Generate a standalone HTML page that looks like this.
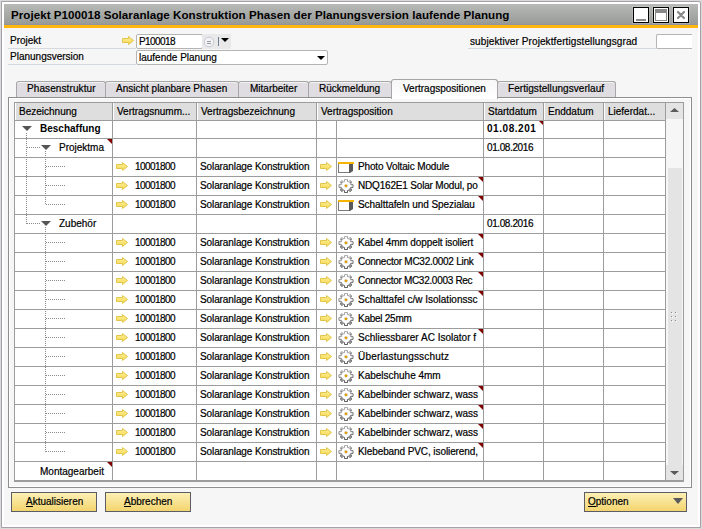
<!DOCTYPE html><html><head><meta charset="utf-8"><style>
html,body{margin:0;padding:0;}
body{width:702px;height:529px;position:relative;overflow:hidden;background:#d9dbd9;font-family:"Liberation Sans", sans-serif;font-size:10px;color:#000;}
</style></head><body>
<div style="position:absolute;left:1px;top:1px;width:698px;height:525px;border:1px solid #a79fa9;background:#fff;border-radius:0 2px 0 0"></div>
<div style="position:absolute;left:4px;top:4px;width:694px;height:21px;background:linear-gradient(#b8bab8,#979997)"></div>
<div style="position:absolute;left:4px;top:24px;width:694px;height:1px;background:#8f959b"></div>
<div style="position:absolute;left:4px;top:25px;width:694px;height:3px;background:#ffb60f"></div>
<div style="position:absolute;left:4px;top:28px;width:694px;height:497px;background:#f6f6f6"></div>
<div style="position:absolute;left:11px;top:4.98px;height:20px;line-height:20px;font-size:11.6px;font-weight:700;color:#000;white-space:nowrap;letter-spacing:0.035px">Projekt P100018 Solaranlage Konstruktion Phasen der Planungsversion laufende Planung</div>
<div style="position:absolute;left:632px;top:6px;width:18px;height:18px;background:rgba(255,255,255,0.18)"></div>
<div style="position:absolute;left:633px;top:7px;width:14px;height:14px;border:1px solid #000;background:#fff"></div>
<div style="position:absolute;left:652px;top:6px;width:18px;height:18px;background:rgba(255,255,255,0.18)"></div>
<div style="position:absolute;left:653px;top:7px;width:14px;height:14px;border:1px solid #000;background:#fff"></div>
<div style="position:absolute;left:672px;top:6px;width:18px;height:18px;background:rgba(255,255,255,0.18)"></div>
<div style="position:absolute;left:673px;top:7px;width:14px;height:14px;border:1px solid #000;background:#fff"></div>
<div style="position:absolute;left:636px;top:19px;width:10px;height:2px;background:#8a8a8a"></div>
<div style="position:absolute;left:655px;top:9px;width:10px;height:10px;border:1px solid #8a8a8a;background:#fff"></div>
<div style="position:absolute;left:655px;top:9px;width:12px;height:4px;background:#8a8a8a"></div>
<svg width="10" height="10" style="position:absolute;left:676px;top:10px"><path d="M2 2 L8 8 M8 2 L2 8" stroke="#8a8a8a" stroke-width="2.2" stroke-linecap="round"/><rect x="3.5" y="3.5" width="3" height="3" fill="#8a8a8a"/></svg>
<div style="position:absolute;left:10px;top:30.53px;height:20px;line-height:20px;font-size:10px;font-weight:400;color:#000;white-space:nowrap;-webkit-text-stroke:0.2px #000;">Projekt</div>
<div style="position:absolute;left:10px;top:46.53px;height:20px;line-height:20px;font-size:10px;font-weight:400;color:#000;white-space:nowrap;-webkit-text-stroke:0.2px #000;">Planungsversion</div>
<div style="position:absolute;left:8px;top:48px;width:128px;height:1px;background:#d3d9df"></div>
<div style="position:absolute;left:8px;top:64px;width:128px;height:1px;background:#d3d9df"></div>
<svg width="12" height="9" viewBox="0 0 12 9" style="position:absolute;left:122px;top:36px"><defs><linearGradient id="ag1" x1="0" y1="0" x2="0" y2="1"><stop offset="0" stop-color="#fdf0a0"/><stop offset="1" stop-color="#f5d84a"/></linearGradient></defs><path d="M0.5 2.5 H6.5 V0.5 L11.5 4.5 L6.5 8.5 V6.5 H0.5 Z" fill="url(#ag1)" stroke="#e2c54a" stroke-width="1"/></svg>
<div style="position:absolute;left:136px;top:34px;width:65px;height:13px;border:1px solid #b4b4b4;background:#fff;border-radius:2px"></div>
<div style="position:absolute;left:139px;top:31.53px;height:20px;line-height:20px;font-size:10px;font-weight:400;color:#000;white-space:nowrap;-webkit-text-stroke:0.2px #000;letter-spacing:-0.6px">P100018</div>
<div style="position:absolute;left:202px;top:34px;width:29px;height:15px;background:#e9e9e9"></div>
<svg width="12" height="12" style="position:absolute;left:203px;top:36px"><circle cx="6" cy="6" r="4.8" fill="#f3f3f3" stroke="#c6c9d8"/><path d="M4 5.5h4M4 7.5h4" stroke="#9a9aa8"/></svg>
<div style="position:absolute;left:218px;top:37px;width:1px;height:9px;background:#6c7c92"></div>
<svg width="8" height="4" style="position:absolute;left:221px;top:38px"><path d="M0 0 H8 L4.0 4 Z" fill="#000"/></svg>
<div style="position:absolute;left:136px;top:50px;width:190px;height:13px;border:1px solid #b4b4b4;background:#fff;border-radius:2px"></div>
<div style="position:absolute;left:139px;top:47.53px;height:20px;line-height:20px;font-size:10px;font-weight:400;color:#000;white-space:nowrap;-webkit-text-stroke:0.2px #000;">laufende Planung</div>
<svg width="8" height="4" style="position:absolute;left:317px;top:56px"><path d="M0 0 H8 L4.0 4 Z" fill="#000"/></svg>
<div style="position:absolute;left:470px;top:31.53px;height:20px;line-height:20px;font-size:10px;font-weight:400;color:#000;white-space:nowrap;-webkit-text-stroke:0.2px #000;letter-spacing:0.1px">subjektiver Projektfertigstellungsgrad</div>
<div style="position:absolute;left:468px;top:48px;width:188px;height:1px;background:#d3d9df"></div>
<div style="position:absolute;left:656px;top:34px;width:35px;height:13px;border:1px solid #b4b4b4;border-right:none;background:#fff;border-radius:2px 0 0 2px"></div>
<div style="position:absolute;left:16px;top:81px;width:88px;height:16px;border:1px solid #a6a6a6;border-bottom:none;border-radius:3px 3px 0 0;background:#dfdde1;box-shadow:inset 0 1px 0 #f2f2f2"></div>
<div style="position:absolute;left:27px;top:78.53px;height:20px;line-height:20px;font-size:10px;font-weight:400;color:#000;white-space:nowrap;-webkit-text-stroke:0.2px #000;letter-spacing:0.1px">Phasenstruktur</div>
<div style="position:absolute;left:105px;top:81px;width:132px;height:16px;border:1px solid #a6a6a6;border-bottom:none;border-radius:3px 3px 0 0;background:#dfdde1;box-shadow:inset 0 1px 0 #f2f2f2"></div>
<div style="position:absolute;left:116px;top:78.53px;height:20px;line-height:20px;font-size:10px;font-weight:400;color:#000;white-space:nowrap;-webkit-text-stroke:0.2px #000;letter-spacing:0px">Ansicht planbare Phasen</div>
<div style="position:absolute;left:238px;top:81px;width:69px;height:16px;border:1px solid #a6a6a6;border-bottom:none;border-radius:3px 3px 0 0;background:#dfdde1;box-shadow:inset 0 1px 0 #f2f2f2"></div>
<div style="position:absolute;left:250px;top:78.53px;height:20px;line-height:20px;font-size:10px;font-weight:400;color:#000;white-space:nowrap;-webkit-text-stroke:0.2px #000;letter-spacing:0px">Mitarbeiter</div>
<div style="position:absolute;left:308px;top:81px;width:82px;height:16px;border:1px solid #a6a6a6;border-bottom:none;border-radius:3px 3px 0 0;background:#dfdde1;box-shadow:inset 0 1px 0 #f2f2f2"></div>
<div style="position:absolute;left:319px;top:78.53px;height:20px;line-height:20px;font-size:10px;font-weight:400;color:#000;white-space:nowrap;-webkit-text-stroke:0.2px #000;letter-spacing:0px">Rückmeldung</div>
<div style="position:absolute;left:497px;top:81px;width:117px;height:16px;border:1px solid #a6a6a6;border-bottom:none;border-radius:3px 3px 0 0;background:#dfdde1;box-shadow:inset 0 1px 0 #f2f2f2"></div>
<div style="position:absolute;left:508px;top:78.53px;height:20px;line-height:20px;font-size:10px;font-weight:400;color:#000;white-space:nowrap;-webkit-text-stroke:0.2px #000;letter-spacing:0.05px">Fertigstellungsverlauf</div>
<div style="position:absolute;left:8px;top:97px;width:682px;height:389px;border:1px solid #8e8e8e;background:#fff"></div>
<div style="position:absolute;left:10px;top:99px;width:680px;height:387px;background:#f6f6f6"></div>
<div style="position:absolute;left:391px;top:79px;width:105px;height:19px;border:1px solid #a6a6a6;border-bottom:none;border-radius:3px 3px 0 0;background:linear-gradient(#f7f7f7,#fff)"></div>
<div style="position:absolute;left:403px;top:78.53px;height:20px;line-height:20px;font-size:10px;font-weight:400;color:#000;white-space:nowrap;-webkit-text-stroke:0.2px #000;">Vertragspositionen</div>
<div style="position:absolute;left:14px;top:102px;width:668px;height:377px;border:1px solid #9c9c9c;border-bottom-width:2px;background:#fff"></div>
<div style="position:absolute;left:15px;top:103px;width:650px;height:17px;background:#dedede"></div>
<div style="position:absolute;left:15px;top:103px;width:1px;height:17px;background:#fff"></div>
<div style="position:absolute;left:19px;top:101.53px;height:20px;line-height:20px;font-size:10px;font-weight:400;color:#000;white-space:nowrap;-webkit-text-stroke:0.2px #000;">Bezeichnung</div>
<div style="position:absolute;left:113px;top:103px;width:1px;height:17px;background:#fff"></div>
<div style="position:absolute;left:117px;top:101.53px;height:20px;line-height:20px;font-size:10px;font-weight:400;color:#000;white-space:nowrap;-webkit-text-stroke:0.2px #000;">Vertragsnumm...</div>
<div style="position:absolute;left:197px;top:103px;width:1px;height:17px;background:#fff"></div>
<div style="position:absolute;left:201px;top:101.53px;height:20px;line-height:20px;font-size:10px;font-weight:400;color:#000;white-space:nowrap;-webkit-text-stroke:0.2px #000;">Vertragsbezeichnung</div>
<div style="position:absolute;left:317px;top:103px;width:1px;height:17px;background:#fff"></div>
<div style="position:absolute;left:321px;top:101.53px;height:20px;line-height:20px;font-size:10px;font-weight:400;color:#000;white-space:nowrap;-webkit-text-stroke:0.2px #000;">Vertragsposition</div>
<div style="position:absolute;left:484px;top:103px;width:1px;height:17px;background:#fff"></div>
<div style="position:absolute;left:488px;top:101.53px;height:20px;line-height:20px;font-size:10px;font-weight:400;color:#000;white-space:nowrap;-webkit-text-stroke:0.2px #000;">Startdatum</div>
<div style="position:absolute;left:544px;top:103px;width:1px;height:17px;background:#fff"></div>
<div style="position:absolute;left:548px;top:101.53px;height:20px;line-height:20px;font-size:10px;font-weight:400;color:#000;white-space:nowrap;-webkit-text-stroke:0.2px #000;">Enddatum</div>
<div style="position:absolute;left:604px;top:103px;width:1px;height:17px;background:#fff"></div>
<div style="position:absolute;left:608px;top:101.53px;height:20px;line-height:20px;font-size:10px;font-weight:400;color:#000;white-space:nowrap;-webkit-text-stroke:0.2px #000;">Lieferdat...</div>
<div style="position:absolute;left:112px;top:103px;width:1px;height:377px;background:#9c9c9c"></div>
<div style="position:absolute;left:196px;top:103px;width:1px;height:377px;background:#9c9c9c"></div>
<div style="position:absolute;left:316px;top:103px;width:1px;height:377px;background:#9c9c9c"></div>
<div style="position:absolute;left:483px;top:103px;width:1px;height:377px;background:#9c9c9c"></div>
<div style="position:absolute;left:543px;top:103px;width:1px;height:377px;background:#9c9c9c"></div>
<div style="position:absolute;left:603px;top:103px;width:1px;height:377px;background:#9c9c9c"></div>
<div style="position:absolute;left:665px;top:103px;width:1px;height:377px;background:#9c9c9c"></div>
<div style="position:absolute;left:336px;top:121px;width:1px;height:359px;background:#9c9c9c"></div>
<div style="position:absolute;left:15px;top:120px;width:650px;height:1px;background:#9c9c9c"></div>
<div style="position:absolute;left:15px;top:138px;width:650px;height:1px;background:#9c9c9c"></div>
<div style="position:absolute;left:15px;top:157px;width:650px;height:1px;background:#9c9c9c"></div>
<div style="position:absolute;left:15px;top:176px;width:650px;height:1px;background:#9c9c9c"></div>
<div style="position:absolute;left:15px;top:195px;width:650px;height:1px;background:#9c9c9c"></div>
<div style="position:absolute;left:15px;top:214px;width:650px;height:1px;background:#9c9c9c"></div>
<div style="position:absolute;left:15px;top:233px;width:650px;height:1px;background:#9c9c9c"></div>
<div style="position:absolute;left:15px;top:252px;width:650px;height:1px;background:#9c9c9c"></div>
<div style="position:absolute;left:15px;top:271px;width:650px;height:1px;background:#9c9c9c"></div>
<div style="position:absolute;left:15px;top:290px;width:650px;height:1px;background:#9c9c9c"></div>
<div style="position:absolute;left:15px;top:309px;width:650px;height:1px;background:#9c9c9c"></div>
<div style="position:absolute;left:15px;top:328px;width:650px;height:1px;background:#9c9c9c"></div>
<div style="position:absolute;left:15px;top:347px;width:650px;height:1px;background:#9c9c9c"></div>
<div style="position:absolute;left:15px;top:366px;width:650px;height:1px;background:#9c9c9c"></div>
<div style="position:absolute;left:15px;top:385px;width:650px;height:1px;background:#9c9c9c"></div>
<div style="position:absolute;left:15px;top:404px;width:650px;height:1px;background:#9c9c9c"></div>
<div style="position:absolute;left:15px;top:423px;width:650px;height:1px;background:#9c9c9c"></div>
<div style="position:absolute;left:15px;top:442px;width:650px;height:1px;background:#9c9c9c"></div>
<div style="position:absolute;left:15px;top:461px;width:650px;height:1px;background:#9c9c9c"></div>
<div style="position:absolute;left:666px;top:103px;width:17px;height:16px;background:#e4e4e4"></div>
<svg width="9" height="4" style="position:absolute;left:670px;top:108px"><path d="M0 4 H9 L4.5 0 Z" fill="#5a5a5a"/></svg>
<div style="position:absolute;left:666px;top:119px;width:17px;height:346px;background:#f6f6f6"></div>
<div style="position:absolute;left:668px;top:168px;width:14px;height:297px;background:#e4e4e4"></div>
<div style="position:absolute;left:666px;top:465px;width:17px;height:15px;background:#e4e4e4"></div>
<svg width="9" height="4" style="position:absolute;left:670px;top:471px"><path d="M0 0 H9 L4.5 4 Z" fill="#5a5a5a"/></svg>
<div style="position:absolute;left:672px;top:313px;width:1px;height:1px;background:#fff"></div>
<div style="position:absolute;left:671px;top:312px;width:1px;height:1px;background:#8c8c8c"></div>
<div style="position:absolute;left:672px;top:317px;width:1px;height:1px;background:#fff"></div>
<div style="position:absolute;left:671px;top:316px;width:1px;height:1px;background:#8c8c8c"></div>
<div style="position:absolute;left:672px;top:321px;width:1px;height:1px;background:#fff"></div>
<div style="position:absolute;left:671px;top:320px;width:1px;height:1px;background:#8c8c8c"></div>
<div style="position:absolute;left:676px;top:313px;width:1px;height:1px;background:#fff"></div>
<div style="position:absolute;left:675px;top:312px;width:1px;height:1px;background:#8c8c8c"></div>
<div style="position:absolute;left:676px;top:317px;width:1px;height:1px;background:#fff"></div>
<div style="position:absolute;left:675px;top:316px;width:1px;height:1px;background:#8c8c8c"></div>
<div style="position:absolute;left:676px;top:321px;width:1px;height:1px;background:#fff"></div>
<div style="position:absolute;left:675px;top:320px;width:1px;height:1px;background:#8c8c8c"></div>
<svg width="10" height="5" style="position:absolute;left:22px;top:126px"><path d="M0 0 H10 L5.0 5 Z" fill="#555"/></svg>
<div style="position:absolute;left:40px;top:118.53px;height:20px;line-height:20px;font-size:10px;font-weight:700;color:#000;white-space:nowrap;">Beschaffung</div>
<div style="position:absolute;left:487px;top:118.53px;height:20px;line-height:20px;font-size:10px;font-weight:700;color:#000;white-space:nowrap;letter-spacing:0.55px">01.08.201</div>
<svg width="4" height="4" style="position:absolute;left:539px;top:121px"><path d="M0 0 H4 V4 Z" fill="#800000"/></svg>
<div style="position:absolute;left:26px;top:133px;width:1px;height:91px;background:repeating-linear-gradient(180deg,#8a8a8a 0 1px,transparent 1px 2px)"></div>
<div style="position:absolute;left:27px;top:147px;width:14px;height:1px;background:repeating-linear-gradient(90deg,#8a8a8a 0 1px,transparent 1px 2px)"></div>
<svg width="10" height="5" style="position:absolute;left:41px;top:145px"><path d="M0 0 H10 L5.0 5 Z" fill="#555"/></svg>
<div style="position:absolute;left:59px;top:137.53px;height:20px;line-height:20px;font-size:10px;font-weight:400;color:#000;white-space:nowrap;-webkit-text-stroke:0.2px #000;">Projektma</div>
<svg width="5" height="5" style="position:absolute;left:107px;top:139px"><path d="M0 0 H5 V5 Z" fill="#800000"/></svg>
<div style="position:absolute;left:487px;top:137.53px;height:20px;line-height:20px;font-size:10px;font-weight:400;color:#000;white-space:nowrap;-webkit-text-stroke:0.2px #000;letter-spacing:-0.4px">01.08.2016</div>
<div style="position:absolute;left:45px;top:151px;width:1px;height:54px;background:repeating-linear-gradient(180deg,#8a8a8a 0 1px,transparent 1px 2px)"></div>
<div style="position:absolute;left:27px;top:223px;width:14px;height:1px;background:repeating-linear-gradient(90deg,#8a8a8a 0 1px,transparent 1px 2px)"></div>
<svg width="10" height="5" style="position:absolute;left:41px;top:221px"><path d="M0 0 H10 L5.0 5 Z" fill="#555"/></svg>
<div style="position:absolute;left:59px;top:213.53px;height:20px;line-height:20px;font-size:10px;font-weight:400;color:#000;white-space:nowrap;-webkit-text-stroke:0.2px #000;">Zubehör</div>
<div style="position:absolute;left:487px;top:213.53px;height:20px;line-height:20px;font-size:10px;font-weight:400;color:#000;white-space:nowrap;-webkit-text-stroke:0.2px #000;letter-spacing:-0.4px">01.08.2016</div>
<div style="position:absolute;left:45px;top:227px;width:1px;height:225px;background:repeating-linear-gradient(180deg,#8a8a8a 0 1px,transparent 1px 2px)"></div>
<div style="position:absolute;left:46px;top:166px;width:19px;height:1px;background:repeating-linear-gradient(90deg,#8a8a8a 0 1px,transparent 1px 2px)"></div>
<svg width="12" height="9" viewBox="0 0 12 9" style="position:absolute;left:116px;top:162px"><defs><linearGradient id="ag2" x1="0" y1="0" x2="0" y2="1"><stop offset="0" stop-color="#fdf0a0"/><stop offset="1" stop-color="#f5d84a"/></linearGradient></defs><path d="M0.5 2.5 H6.5 V0.5 L11.5 4.5 L6.5 8.5 V6.5 H0.5 Z" fill="url(#ag2)" stroke="#e2c54a" stroke-width="1"/></svg>
<div style="position:absolute;left:135px;top:156.53px;height:20px;line-height:20px;font-size:10px;font-weight:400;color:#000;white-space:nowrap;-webkit-text-stroke:0.2px #000;letter-spacing:-0.55px">10001800</div>
<div style="position:absolute;left:200px;top:156.53px;height:20px;line-height:20px;font-size:10px;font-weight:400;color:#000;white-space:nowrap;-webkit-text-stroke:0.2px #000;letter-spacing:-0.1px">Solaranlage Konstruktion</div>
<svg width="12" height="9" viewBox="0 0 12 9" style="position:absolute;left:320px;top:162px"><defs><linearGradient id="ag3" x1="0" y1="0" x2="0" y2="1"><stop offset="0" stop-color="#fdf0a0"/><stop offset="1" stop-color="#f5d84a"/></linearGradient></defs><path d="M0.5 2.5 H6.5 V0.5 L11.5 4.5 L6.5 8.5 V6.5 H0.5 Z" fill="url(#ag3)" stroke="#e2c54a" stroke-width="1"/></svg>
<svg width="16" height="11" viewBox="0 0 16 11" style="position:absolute;left:338px;top:162px"><rect x="0.5" y="1.5" width="11" height="9" fill="#fff" stroke="#7a7a7a" stroke-width="1"/><path d="M11 2 L15 2 L15 9 L12 11 L11 11 Z" fill="#5a5a5a"/><rect x="0" y="0" width="16" height="2" fill="#f4b400"/></svg>
<div style="position:absolute;left:358px;top:158px;width:121px;height:18px;overflow:hidden">
<div style="position:absolute;left:0px;top:-1.47px;height:20px;line-height:20px;font-size:10px;font-weight:400;color:#000;white-space:nowrap;-webkit-text-stroke:0.2px #000;letter-spacing:-0.14px">Photo Voltaic Module</div>
</div>
<div style="position:absolute;left:46px;top:185px;width:19px;height:1px;background:repeating-linear-gradient(90deg,#8a8a8a 0 1px,transparent 1px 2px)"></div>
<svg width="12" height="9" viewBox="0 0 12 9" style="position:absolute;left:116px;top:181px"><defs><linearGradient id="ag4" x1="0" y1="0" x2="0" y2="1"><stop offset="0" stop-color="#fdf0a0"/><stop offset="1" stop-color="#f5d84a"/></linearGradient></defs><path d="M0.5 2.5 H6.5 V0.5 L11.5 4.5 L6.5 8.5 V6.5 H0.5 Z" fill="url(#ag4)" stroke="#e2c54a" stroke-width="1"/></svg>
<div style="position:absolute;left:135px;top:175.53px;height:20px;line-height:20px;font-size:10px;font-weight:400;color:#000;white-space:nowrap;-webkit-text-stroke:0.2px #000;letter-spacing:-0.55px">10001800</div>
<div style="position:absolute;left:200px;top:175.53px;height:20px;line-height:20px;font-size:10px;font-weight:400;color:#000;white-space:nowrap;-webkit-text-stroke:0.2px #000;letter-spacing:-0.1px">Solaranlage Konstruktion</div>
<svg width="12" height="9" viewBox="0 0 12 9" style="position:absolute;left:320px;top:181px"><defs><linearGradient id="ag5" x1="0" y1="0" x2="0" y2="1"><stop offset="0" stop-color="#fdf0a0"/><stop offset="1" stop-color="#f5d84a"/></linearGradient></defs><path d="M0.5 2.5 H6.5 V0.5 L11.5 4.5 L6.5 8.5 V6.5 H0.5 Z" fill="url(#ag5)" stroke="#e2c54a" stroke-width="1"/></svg>
<svg width="16" height="14" viewBox="0 0 16 15" preserveAspectRatio="none" style="position:absolute;left:338px;top:179px"><defs><linearGradient id="gg6" x1="0" y1="0" x2="0.3" y2="1"><stop offset="0" stop-color="#b4b4b4"/><stop offset="1" stop-color="#505050"/></linearGradient></defs><path d="M6.62 2.69 L6.50 0.46 L9.50 0.46 L9.38 2.69 L10.42 3.13 L11.92 1.46 L14.04 3.58 L12.37 5.08 L12.81 6.12 L15.04 6.00 L15.04 9.00 L12.81 8.88 L12.37 9.92 L14.04 11.42 L11.92 13.54 L10.42 11.87 L9.38 12.31 L9.50 14.54 L6.50 14.54 L6.62 12.31 L5.58 11.87 L4.08 13.54 L1.96 11.42 L3.63 9.92 L3.19 8.88 L0.96 9.00 L0.96 6.00 L3.19 6.12 L3.63 5.08 L1.96 3.58 L4.08 1.46 L5.58 3.13 Z" fill="#fff" stroke="url(#gg6)" stroke-width="1"/><path d="M2.2 11.2 L4 9.6 L5.6 11.4 L4 13.2 Z M13.8 11.2 L12 9.6 L10.4 11.4 L12 13.2 Z M2.6 4 L4 2.2 L5 3.4 L3.6 4.8 Z M12.4 4.6 L13.6 3.6 L12.2 2.4 L11 3.6 Z" fill="#6a6a6a" opacity="0.75"/><circle cx="8" cy="7.3" r="2" fill="#dde4f2"/><circle cx="8" cy="7.3" r="1.45" fill="#e0a000"/></svg>
<div style="position:absolute;left:358px;top:177px;width:121px;height:18px;overflow:hidden">
<div style="position:absolute;left:0px;top:-1.47px;height:20px;line-height:20px;font-size:10px;font-weight:400;color:#000;white-space:nowrap;-webkit-text-stroke:0.2px #000;letter-spacing:-0.18px">NDQ162E1 Solar Modul, po</div>
</div>
<svg width="5" height="5" style="position:absolute;left:478px;top:177px"><path d="M0 0 H5 V5 Z" fill="#800000"/></svg>
<div style="position:absolute;left:46px;top:204px;width:19px;height:1px;background:repeating-linear-gradient(90deg,#8a8a8a 0 1px,transparent 1px 2px)"></div>
<svg width="12" height="9" viewBox="0 0 12 9" style="position:absolute;left:116px;top:200px"><defs><linearGradient id="ag7" x1="0" y1="0" x2="0" y2="1"><stop offset="0" stop-color="#fdf0a0"/><stop offset="1" stop-color="#f5d84a"/></linearGradient></defs><path d="M0.5 2.5 H6.5 V0.5 L11.5 4.5 L6.5 8.5 V6.5 H0.5 Z" fill="url(#ag7)" stroke="#e2c54a" stroke-width="1"/></svg>
<div style="position:absolute;left:135px;top:194.53px;height:20px;line-height:20px;font-size:10px;font-weight:400;color:#000;white-space:nowrap;-webkit-text-stroke:0.2px #000;letter-spacing:-0.55px">10001800</div>
<div style="position:absolute;left:200px;top:194.53px;height:20px;line-height:20px;font-size:10px;font-weight:400;color:#000;white-space:nowrap;-webkit-text-stroke:0.2px #000;letter-spacing:-0.1px">Solaranlage Konstruktion</div>
<svg width="12" height="9" viewBox="0 0 12 9" style="position:absolute;left:320px;top:200px"><defs><linearGradient id="ag8" x1="0" y1="0" x2="0" y2="1"><stop offset="0" stop-color="#fdf0a0"/><stop offset="1" stop-color="#f5d84a"/></linearGradient></defs><path d="M0.5 2.5 H6.5 V0.5 L11.5 4.5 L6.5 8.5 V6.5 H0.5 Z" fill="url(#ag8)" stroke="#e2c54a" stroke-width="1"/></svg>
<svg width="16" height="11" viewBox="0 0 16 11" style="position:absolute;left:338px;top:200px"><rect x="0.5" y="1.5" width="11" height="9" fill="#fff" stroke="#7a7a7a" stroke-width="1"/><path d="M11 2 L15 2 L15 9 L12 11 L11 11 Z" fill="#5a5a5a"/><rect x="0" y="0" width="16" height="2" fill="#f4b400"/></svg>
<div style="position:absolute;left:358px;top:196px;width:121px;height:18px;overflow:hidden">
<div style="position:absolute;left:0px;top:-1.47px;height:20px;line-height:20px;font-size:10px;font-weight:400;color:#000;white-space:nowrap;-webkit-text-stroke:0.2px #000;letter-spacing:-0.06px">Schalttafeln und Spezialau</div>
</div>
<svg width="5" height="5" style="position:absolute;left:478px;top:196px"><path d="M0 0 H5 V5 Z" fill="#800000"/></svg>
<div style="position:absolute;left:46px;top:242px;width:19px;height:1px;background:repeating-linear-gradient(90deg,#8a8a8a 0 1px,transparent 1px 2px)"></div>
<svg width="12" height="9" viewBox="0 0 12 9" style="position:absolute;left:116px;top:238px"><defs><linearGradient id="ag9" x1="0" y1="0" x2="0" y2="1"><stop offset="0" stop-color="#fdf0a0"/><stop offset="1" stop-color="#f5d84a"/></linearGradient></defs><path d="M0.5 2.5 H6.5 V0.5 L11.5 4.5 L6.5 8.5 V6.5 H0.5 Z" fill="url(#ag9)" stroke="#e2c54a" stroke-width="1"/></svg>
<div style="position:absolute;left:135px;top:232.53px;height:20px;line-height:20px;font-size:10px;font-weight:400;color:#000;white-space:nowrap;-webkit-text-stroke:0.2px #000;letter-spacing:-0.55px">10001800</div>
<div style="position:absolute;left:200px;top:232.53px;height:20px;line-height:20px;font-size:10px;font-weight:400;color:#000;white-space:nowrap;-webkit-text-stroke:0.2px #000;letter-spacing:-0.1px">Solaranlage Konstruktion</div>
<svg width="12" height="9" viewBox="0 0 12 9" style="position:absolute;left:320px;top:238px"><defs><linearGradient id="ag10" x1="0" y1="0" x2="0" y2="1"><stop offset="0" stop-color="#fdf0a0"/><stop offset="1" stop-color="#f5d84a"/></linearGradient></defs><path d="M0.5 2.5 H6.5 V0.5 L11.5 4.5 L6.5 8.5 V6.5 H0.5 Z" fill="url(#ag10)" stroke="#e2c54a" stroke-width="1"/></svg>
<svg width="16" height="14" viewBox="0 0 16 15" preserveAspectRatio="none" style="position:absolute;left:338px;top:236px"><defs><linearGradient id="gg11" x1="0" y1="0" x2="0.3" y2="1"><stop offset="0" stop-color="#b4b4b4"/><stop offset="1" stop-color="#505050"/></linearGradient></defs><path d="M6.62 2.69 L6.50 0.46 L9.50 0.46 L9.38 2.69 L10.42 3.13 L11.92 1.46 L14.04 3.58 L12.37 5.08 L12.81 6.12 L15.04 6.00 L15.04 9.00 L12.81 8.88 L12.37 9.92 L14.04 11.42 L11.92 13.54 L10.42 11.87 L9.38 12.31 L9.50 14.54 L6.50 14.54 L6.62 12.31 L5.58 11.87 L4.08 13.54 L1.96 11.42 L3.63 9.92 L3.19 8.88 L0.96 9.00 L0.96 6.00 L3.19 6.12 L3.63 5.08 L1.96 3.58 L4.08 1.46 L5.58 3.13 Z" fill="#fff" stroke="url(#gg11)" stroke-width="1"/><path d="M2.2 11.2 L4 9.6 L5.6 11.4 L4 13.2 Z M13.8 11.2 L12 9.6 L10.4 11.4 L12 13.2 Z M2.6 4 L4 2.2 L5 3.4 L3.6 4.8 Z M12.4 4.6 L13.6 3.6 L12.2 2.4 L11 3.6 Z" fill="#6a6a6a" opacity="0.75"/><circle cx="8" cy="7.3" r="2" fill="#dde4f2"/><circle cx="8" cy="7.3" r="1.45" fill="#e0a000"/></svg>
<div style="position:absolute;left:358px;top:234px;width:121px;height:18px;overflow:hidden">
<div style="position:absolute;left:0px;top:-1.47px;height:20px;line-height:20px;font-size:10px;font-weight:400;color:#000;white-space:nowrap;-webkit-text-stroke:0.2px #000;letter-spacing:-0.1px">Kabel 4mm doppelt isoliert</div>
</div>
<svg width="5" height="5" style="position:absolute;left:478px;top:234px"><path d="M0 0 H5 V5 Z" fill="#800000"/></svg>
<div style="position:absolute;left:46px;top:261px;width:19px;height:1px;background:repeating-linear-gradient(90deg,#8a8a8a 0 1px,transparent 1px 2px)"></div>
<svg width="12" height="9" viewBox="0 0 12 9" style="position:absolute;left:116px;top:257px"><defs><linearGradient id="ag12" x1="0" y1="0" x2="0" y2="1"><stop offset="0" stop-color="#fdf0a0"/><stop offset="1" stop-color="#f5d84a"/></linearGradient></defs><path d="M0.5 2.5 H6.5 V0.5 L11.5 4.5 L6.5 8.5 V6.5 H0.5 Z" fill="url(#ag12)" stroke="#e2c54a" stroke-width="1"/></svg>
<div style="position:absolute;left:135px;top:251.53px;height:20px;line-height:20px;font-size:10px;font-weight:400;color:#000;white-space:nowrap;-webkit-text-stroke:0.2px #000;letter-spacing:-0.55px">10001800</div>
<div style="position:absolute;left:200px;top:251.53px;height:20px;line-height:20px;font-size:10px;font-weight:400;color:#000;white-space:nowrap;-webkit-text-stroke:0.2px #000;letter-spacing:-0.1px">Solaranlage Konstruktion</div>
<svg width="12" height="9" viewBox="0 0 12 9" style="position:absolute;left:320px;top:257px"><defs><linearGradient id="ag13" x1="0" y1="0" x2="0" y2="1"><stop offset="0" stop-color="#fdf0a0"/><stop offset="1" stop-color="#f5d84a"/></linearGradient></defs><path d="M0.5 2.5 H6.5 V0.5 L11.5 4.5 L6.5 8.5 V6.5 H0.5 Z" fill="url(#ag13)" stroke="#e2c54a" stroke-width="1"/></svg>
<svg width="16" height="14" viewBox="0 0 16 15" preserveAspectRatio="none" style="position:absolute;left:338px;top:255px"><defs><linearGradient id="gg14" x1="0" y1="0" x2="0.3" y2="1"><stop offset="0" stop-color="#b4b4b4"/><stop offset="1" stop-color="#505050"/></linearGradient></defs><path d="M6.62 2.69 L6.50 0.46 L9.50 0.46 L9.38 2.69 L10.42 3.13 L11.92 1.46 L14.04 3.58 L12.37 5.08 L12.81 6.12 L15.04 6.00 L15.04 9.00 L12.81 8.88 L12.37 9.92 L14.04 11.42 L11.92 13.54 L10.42 11.87 L9.38 12.31 L9.50 14.54 L6.50 14.54 L6.62 12.31 L5.58 11.87 L4.08 13.54 L1.96 11.42 L3.63 9.92 L3.19 8.88 L0.96 9.00 L0.96 6.00 L3.19 6.12 L3.63 5.08 L1.96 3.58 L4.08 1.46 L5.58 3.13 Z" fill="#fff" stroke="url(#gg14)" stroke-width="1"/><path d="M2.2 11.2 L4 9.6 L5.6 11.4 L4 13.2 Z M13.8 11.2 L12 9.6 L10.4 11.4 L12 13.2 Z M2.6 4 L4 2.2 L5 3.4 L3.6 4.8 Z M12.4 4.6 L13.6 3.6 L12.2 2.4 L11 3.6 Z" fill="#6a6a6a" opacity="0.75"/><circle cx="8" cy="7.3" r="2" fill="#dde4f2"/><circle cx="8" cy="7.3" r="1.45" fill="#e0a000"/></svg>
<div style="position:absolute;left:358px;top:253px;width:121px;height:18px;overflow:hidden">
<div style="position:absolute;left:0px;top:-1.47px;height:20px;line-height:20px;font-size:10px;font-weight:400;color:#000;white-space:nowrap;-webkit-text-stroke:0.2px #000;letter-spacing:-0.26px">Connector MC32.0002 Link</div>
</div>
<svg width="5" height="5" style="position:absolute;left:478px;top:253px"><path d="M0 0 H5 V5 Z" fill="#800000"/></svg>
<div style="position:absolute;left:46px;top:280px;width:19px;height:1px;background:repeating-linear-gradient(90deg,#8a8a8a 0 1px,transparent 1px 2px)"></div>
<svg width="12" height="9" viewBox="0 0 12 9" style="position:absolute;left:116px;top:276px"><defs><linearGradient id="ag15" x1="0" y1="0" x2="0" y2="1"><stop offset="0" stop-color="#fdf0a0"/><stop offset="1" stop-color="#f5d84a"/></linearGradient></defs><path d="M0.5 2.5 H6.5 V0.5 L11.5 4.5 L6.5 8.5 V6.5 H0.5 Z" fill="url(#ag15)" stroke="#e2c54a" stroke-width="1"/></svg>
<div style="position:absolute;left:135px;top:270.53px;height:20px;line-height:20px;font-size:10px;font-weight:400;color:#000;white-space:nowrap;-webkit-text-stroke:0.2px #000;letter-spacing:-0.55px">10001800</div>
<div style="position:absolute;left:200px;top:270.53px;height:20px;line-height:20px;font-size:10px;font-weight:400;color:#000;white-space:nowrap;-webkit-text-stroke:0.2px #000;letter-spacing:-0.1px">Solaranlage Konstruktion</div>
<svg width="12" height="9" viewBox="0 0 12 9" style="position:absolute;left:320px;top:276px"><defs><linearGradient id="ag16" x1="0" y1="0" x2="0" y2="1"><stop offset="0" stop-color="#fdf0a0"/><stop offset="1" stop-color="#f5d84a"/></linearGradient></defs><path d="M0.5 2.5 H6.5 V0.5 L11.5 4.5 L6.5 8.5 V6.5 H0.5 Z" fill="url(#ag16)" stroke="#e2c54a" stroke-width="1"/></svg>
<svg width="16" height="14" viewBox="0 0 16 15" preserveAspectRatio="none" style="position:absolute;left:338px;top:274px"><defs><linearGradient id="gg17" x1="0" y1="0" x2="0.3" y2="1"><stop offset="0" stop-color="#b4b4b4"/><stop offset="1" stop-color="#505050"/></linearGradient></defs><path d="M6.62 2.69 L6.50 0.46 L9.50 0.46 L9.38 2.69 L10.42 3.13 L11.92 1.46 L14.04 3.58 L12.37 5.08 L12.81 6.12 L15.04 6.00 L15.04 9.00 L12.81 8.88 L12.37 9.92 L14.04 11.42 L11.92 13.54 L10.42 11.87 L9.38 12.31 L9.50 14.54 L6.50 14.54 L6.62 12.31 L5.58 11.87 L4.08 13.54 L1.96 11.42 L3.63 9.92 L3.19 8.88 L0.96 9.00 L0.96 6.00 L3.19 6.12 L3.63 5.08 L1.96 3.58 L4.08 1.46 L5.58 3.13 Z" fill="#fff" stroke="url(#gg17)" stroke-width="1"/><path d="M2.2 11.2 L4 9.6 L5.6 11.4 L4 13.2 Z M13.8 11.2 L12 9.6 L10.4 11.4 L12 13.2 Z M2.6 4 L4 2.2 L5 3.4 L3.6 4.8 Z M12.4 4.6 L13.6 3.6 L12.2 2.4 L11 3.6 Z" fill="#6a6a6a" opacity="0.75"/><circle cx="8" cy="7.3" r="2" fill="#dde4f2"/><circle cx="8" cy="7.3" r="1.45" fill="#e0a000"/></svg>
<div style="position:absolute;left:358px;top:272px;width:121px;height:18px;overflow:hidden">
<div style="position:absolute;left:0px;top:-1.47px;height:20px;line-height:20px;font-size:10px;font-weight:400;color:#000;white-space:nowrap;-webkit-text-stroke:0.2px #000;letter-spacing:-0.3px">Connector MC32.0003 Rec</div>
</div>
<svg width="5" height="5" style="position:absolute;left:478px;top:272px"><path d="M0 0 H5 V5 Z" fill="#800000"/></svg>
<div style="position:absolute;left:46px;top:299px;width:19px;height:1px;background:repeating-linear-gradient(90deg,#8a8a8a 0 1px,transparent 1px 2px)"></div>
<svg width="12" height="9" viewBox="0 0 12 9" style="position:absolute;left:116px;top:295px"><defs><linearGradient id="ag18" x1="0" y1="0" x2="0" y2="1"><stop offset="0" stop-color="#fdf0a0"/><stop offset="1" stop-color="#f5d84a"/></linearGradient></defs><path d="M0.5 2.5 H6.5 V0.5 L11.5 4.5 L6.5 8.5 V6.5 H0.5 Z" fill="url(#ag18)" stroke="#e2c54a" stroke-width="1"/></svg>
<div style="position:absolute;left:135px;top:289.53px;height:20px;line-height:20px;font-size:10px;font-weight:400;color:#000;white-space:nowrap;-webkit-text-stroke:0.2px #000;letter-spacing:-0.55px">10001800</div>
<div style="position:absolute;left:200px;top:289.53px;height:20px;line-height:20px;font-size:10px;font-weight:400;color:#000;white-space:nowrap;-webkit-text-stroke:0.2px #000;letter-spacing:-0.1px">Solaranlage Konstruktion</div>
<svg width="12" height="9" viewBox="0 0 12 9" style="position:absolute;left:320px;top:295px"><defs><linearGradient id="ag19" x1="0" y1="0" x2="0" y2="1"><stop offset="0" stop-color="#fdf0a0"/><stop offset="1" stop-color="#f5d84a"/></linearGradient></defs><path d="M0.5 2.5 H6.5 V0.5 L11.5 4.5 L6.5 8.5 V6.5 H0.5 Z" fill="url(#ag19)" stroke="#e2c54a" stroke-width="1"/></svg>
<svg width="16" height="14" viewBox="0 0 16 15" preserveAspectRatio="none" style="position:absolute;left:338px;top:293px"><defs><linearGradient id="gg20" x1="0" y1="0" x2="0.3" y2="1"><stop offset="0" stop-color="#b4b4b4"/><stop offset="1" stop-color="#505050"/></linearGradient></defs><path d="M6.62 2.69 L6.50 0.46 L9.50 0.46 L9.38 2.69 L10.42 3.13 L11.92 1.46 L14.04 3.58 L12.37 5.08 L12.81 6.12 L15.04 6.00 L15.04 9.00 L12.81 8.88 L12.37 9.92 L14.04 11.42 L11.92 13.54 L10.42 11.87 L9.38 12.31 L9.50 14.54 L6.50 14.54 L6.62 12.31 L5.58 11.87 L4.08 13.54 L1.96 11.42 L3.63 9.92 L3.19 8.88 L0.96 9.00 L0.96 6.00 L3.19 6.12 L3.63 5.08 L1.96 3.58 L4.08 1.46 L5.58 3.13 Z" fill="#fff" stroke="url(#gg20)" stroke-width="1"/><path d="M2.2 11.2 L4 9.6 L5.6 11.4 L4 13.2 Z M13.8 11.2 L12 9.6 L10.4 11.4 L12 13.2 Z M2.6 4 L4 2.2 L5 3.4 L3.6 4.8 Z M12.4 4.6 L13.6 3.6 L12.2 2.4 L11 3.6 Z" fill="#6a6a6a" opacity="0.75"/><circle cx="8" cy="7.3" r="2" fill="#dde4f2"/><circle cx="8" cy="7.3" r="1.45" fill="#e0a000"/></svg>
<div style="position:absolute;left:358px;top:291px;width:121px;height:18px;overflow:hidden">
<div style="position:absolute;left:0px;top:-1.47px;height:20px;line-height:20px;font-size:10px;font-weight:400;color:#000;white-space:nowrap;-webkit-text-stroke:0.2px #000;letter-spacing:0.0px">Schalttafel c/w Isolationssc</div>
</div>
<svg width="5" height="5" style="position:absolute;left:478px;top:291px"><path d="M0 0 H5 V5 Z" fill="#800000"/></svg>
<div style="position:absolute;left:46px;top:318px;width:19px;height:1px;background:repeating-linear-gradient(90deg,#8a8a8a 0 1px,transparent 1px 2px)"></div>
<svg width="12" height="9" viewBox="0 0 12 9" style="position:absolute;left:116px;top:314px"><defs><linearGradient id="ag21" x1="0" y1="0" x2="0" y2="1"><stop offset="0" stop-color="#fdf0a0"/><stop offset="1" stop-color="#f5d84a"/></linearGradient></defs><path d="M0.5 2.5 H6.5 V0.5 L11.5 4.5 L6.5 8.5 V6.5 H0.5 Z" fill="url(#ag21)" stroke="#e2c54a" stroke-width="1"/></svg>
<div style="position:absolute;left:135px;top:308.53px;height:20px;line-height:20px;font-size:10px;font-weight:400;color:#000;white-space:nowrap;-webkit-text-stroke:0.2px #000;letter-spacing:-0.55px">10001800</div>
<div style="position:absolute;left:200px;top:308.53px;height:20px;line-height:20px;font-size:10px;font-weight:400;color:#000;white-space:nowrap;-webkit-text-stroke:0.2px #000;letter-spacing:-0.1px">Solaranlage Konstruktion</div>
<svg width="12" height="9" viewBox="0 0 12 9" style="position:absolute;left:320px;top:314px"><defs><linearGradient id="ag22" x1="0" y1="0" x2="0" y2="1"><stop offset="0" stop-color="#fdf0a0"/><stop offset="1" stop-color="#f5d84a"/></linearGradient></defs><path d="M0.5 2.5 H6.5 V0.5 L11.5 4.5 L6.5 8.5 V6.5 H0.5 Z" fill="url(#ag22)" stroke="#e2c54a" stroke-width="1"/></svg>
<svg width="16" height="14" viewBox="0 0 16 15" preserveAspectRatio="none" style="position:absolute;left:338px;top:312px"><defs><linearGradient id="gg23" x1="0" y1="0" x2="0.3" y2="1"><stop offset="0" stop-color="#b4b4b4"/><stop offset="1" stop-color="#505050"/></linearGradient></defs><path d="M6.62 2.69 L6.50 0.46 L9.50 0.46 L9.38 2.69 L10.42 3.13 L11.92 1.46 L14.04 3.58 L12.37 5.08 L12.81 6.12 L15.04 6.00 L15.04 9.00 L12.81 8.88 L12.37 9.92 L14.04 11.42 L11.92 13.54 L10.42 11.87 L9.38 12.31 L9.50 14.54 L6.50 14.54 L6.62 12.31 L5.58 11.87 L4.08 13.54 L1.96 11.42 L3.63 9.92 L3.19 8.88 L0.96 9.00 L0.96 6.00 L3.19 6.12 L3.63 5.08 L1.96 3.58 L4.08 1.46 L5.58 3.13 Z" fill="#fff" stroke="url(#gg23)" stroke-width="1"/><path d="M2.2 11.2 L4 9.6 L5.6 11.4 L4 13.2 Z M13.8 11.2 L12 9.6 L10.4 11.4 L12 13.2 Z M2.6 4 L4 2.2 L5 3.4 L3.6 4.8 Z M12.4 4.6 L13.6 3.6 L12.2 2.4 L11 3.6 Z" fill="#6a6a6a" opacity="0.75"/><circle cx="8" cy="7.3" r="2" fill="#dde4f2"/><circle cx="8" cy="7.3" r="1.45" fill="#e0a000"/></svg>
<div style="position:absolute;left:358px;top:310px;width:121px;height:18px;overflow:hidden">
<div style="position:absolute;left:0px;top:-1.47px;height:20px;line-height:20px;font-size:10px;font-weight:400;color:#000;white-space:nowrap;-webkit-text-stroke:0.2px #000;letter-spacing:-0.26px">Kabel 25mm</div>
</div>
<div style="position:absolute;left:46px;top:337px;width:19px;height:1px;background:repeating-linear-gradient(90deg,#8a8a8a 0 1px,transparent 1px 2px)"></div>
<svg width="12" height="9" viewBox="0 0 12 9" style="position:absolute;left:116px;top:333px"><defs><linearGradient id="ag24" x1="0" y1="0" x2="0" y2="1"><stop offset="0" stop-color="#fdf0a0"/><stop offset="1" stop-color="#f5d84a"/></linearGradient></defs><path d="M0.5 2.5 H6.5 V0.5 L11.5 4.5 L6.5 8.5 V6.5 H0.5 Z" fill="url(#ag24)" stroke="#e2c54a" stroke-width="1"/></svg>
<div style="position:absolute;left:135px;top:327.53px;height:20px;line-height:20px;font-size:10px;font-weight:400;color:#000;white-space:nowrap;-webkit-text-stroke:0.2px #000;letter-spacing:-0.55px">10001800</div>
<div style="position:absolute;left:200px;top:327.53px;height:20px;line-height:20px;font-size:10px;font-weight:400;color:#000;white-space:nowrap;-webkit-text-stroke:0.2px #000;letter-spacing:-0.1px">Solaranlage Konstruktion</div>
<svg width="12" height="9" viewBox="0 0 12 9" style="position:absolute;left:320px;top:333px"><defs><linearGradient id="ag25" x1="0" y1="0" x2="0" y2="1"><stop offset="0" stop-color="#fdf0a0"/><stop offset="1" stop-color="#f5d84a"/></linearGradient></defs><path d="M0.5 2.5 H6.5 V0.5 L11.5 4.5 L6.5 8.5 V6.5 H0.5 Z" fill="url(#ag25)" stroke="#e2c54a" stroke-width="1"/></svg>
<svg width="16" height="14" viewBox="0 0 16 15" preserveAspectRatio="none" style="position:absolute;left:338px;top:331px"><defs><linearGradient id="gg26" x1="0" y1="0" x2="0.3" y2="1"><stop offset="0" stop-color="#b4b4b4"/><stop offset="1" stop-color="#505050"/></linearGradient></defs><path d="M6.62 2.69 L6.50 0.46 L9.50 0.46 L9.38 2.69 L10.42 3.13 L11.92 1.46 L14.04 3.58 L12.37 5.08 L12.81 6.12 L15.04 6.00 L15.04 9.00 L12.81 8.88 L12.37 9.92 L14.04 11.42 L11.92 13.54 L10.42 11.87 L9.38 12.31 L9.50 14.54 L6.50 14.54 L6.62 12.31 L5.58 11.87 L4.08 13.54 L1.96 11.42 L3.63 9.92 L3.19 8.88 L0.96 9.00 L0.96 6.00 L3.19 6.12 L3.63 5.08 L1.96 3.58 L4.08 1.46 L5.58 3.13 Z" fill="#fff" stroke="url(#gg26)" stroke-width="1"/><path d="M2.2 11.2 L4 9.6 L5.6 11.4 L4 13.2 Z M13.8 11.2 L12 9.6 L10.4 11.4 L12 13.2 Z M2.6 4 L4 2.2 L5 3.4 L3.6 4.8 Z M12.4 4.6 L13.6 3.6 L12.2 2.4 L11 3.6 Z" fill="#6a6a6a" opacity="0.75"/><circle cx="8" cy="7.3" r="2" fill="#dde4f2"/><circle cx="8" cy="7.3" r="1.45" fill="#e0a000"/></svg>
<div style="position:absolute;left:358px;top:329px;width:121px;height:18px;overflow:hidden">
<div style="position:absolute;left:0px;top:-1.47px;height:20px;line-height:20px;font-size:10px;font-weight:400;color:#000;white-space:nowrap;-webkit-text-stroke:0.2px #000;letter-spacing:0.01px">Schliessbarer AC Isolator f</div>
</div>
<svg width="5" height="5" style="position:absolute;left:478px;top:329px"><path d="M0 0 H5 V5 Z" fill="#800000"/></svg>
<div style="position:absolute;left:46px;top:356px;width:19px;height:1px;background:repeating-linear-gradient(90deg,#8a8a8a 0 1px,transparent 1px 2px)"></div>
<svg width="12" height="9" viewBox="0 0 12 9" style="position:absolute;left:116px;top:352px"><defs><linearGradient id="ag27" x1="0" y1="0" x2="0" y2="1"><stop offset="0" stop-color="#fdf0a0"/><stop offset="1" stop-color="#f5d84a"/></linearGradient></defs><path d="M0.5 2.5 H6.5 V0.5 L11.5 4.5 L6.5 8.5 V6.5 H0.5 Z" fill="url(#ag27)" stroke="#e2c54a" stroke-width="1"/></svg>
<div style="position:absolute;left:135px;top:346.53px;height:20px;line-height:20px;font-size:10px;font-weight:400;color:#000;white-space:nowrap;-webkit-text-stroke:0.2px #000;letter-spacing:-0.55px">10001800</div>
<div style="position:absolute;left:200px;top:346.53px;height:20px;line-height:20px;font-size:10px;font-weight:400;color:#000;white-space:nowrap;-webkit-text-stroke:0.2px #000;letter-spacing:-0.1px">Solaranlage Konstruktion</div>
<svg width="12" height="9" viewBox="0 0 12 9" style="position:absolute;left:320px;top:352px"><defs><linearGradient id="ag28" x1="0" y1="0" x2="0" y2="1"><stop offset="0" stop-color="#fdf0a0"/><stop offset="1" stop-color="#f5d84a"/></linearGradient></defs><path d="M0.5 2.5 H6.5 V0.5 L11.5 4.5 L6.5 8.5 V6.5 H0.5 Z" fill="url(#ag28)" stroke="#e2c54a" stroke-width="1"/></svg>
<svg width="16" height="14" viewBox="0 0 16 15" preserveAspectRatio="none" style="position:absolute;left:338px;top:350px"><defs><linearGradient id="gg29" x1="0" y1="0" x2="0.3" y2="1"><stop offset="0" stop-color="#b4b4b4"/><stop offset="1" stop-color="#505050"/></linearGradient></defs><path d="M6.62 2.69 L6.50 0.46 L9.50 0.46 L9.38 2.69 L10.42 3.13 L11.92 1.46 L14.04 3.58 L12.37 5.08 L12.81 6.12 L15.04 6.00 L15.04 9.00 L12.81 8.88 L12.37 9.92 L14.04 11.42 L11.92 13.54 L10.42 11.87 L9.38 12.31 L9.50 14.54 L6.50 14.54 L6.62 12.31 L5.58 11.87 L4.08 13.54 L1.96 11.42 L3.63 9.92 L3.19 8.88 L0.96 9.00 L0.96 6.00 L3.19 6.12 L3.63 5.08 L1.96 3.58 L4.08 1.46 L5.58 3.13 Z" fill="#fff" stroke="url(#gg29)" stroke-width="1"/><path d="M2.2 11.2 L4 9.6 L5.6 11.4 L4 13.2 Z M13.8 11.2 L12 9.6 L10.4 11.4 L12 13.2 Z M2.6 4 L4 2.2 L5 3.4 L3.6 4.8 Z M12.4 4.6 L13.6 3.6 L12.2 2.4 L11 3.6 Z" fill="#6a6a6a" opacity="0.75"/><circle cx="8" cy="7.3" r="2" fill="#dde4f2"/><circle cx="8" cy="7.3" r="1.45" fill="#e0a000"/></svg>
<div style="position:absolute;left:358px;top:348px;width:121px;height:18px;overflow:hidden">
<div style="position:absolute;left:0px;top:-1.47px;height:20px;line-height:20px;font-size:10px;font-weight:400;color:#000;white-space:nowrap;-webkit-text-stroke:0.2px #000;letter-spacing:0.18px">Überlastungsschutz</div>
</div>
<div style="position:absolute;left:46px;top:375px;width:19px;height:1px;background:repeating-linear-gradient(90deg,#8a8a8a 0 1px,transparent 1px 2px)"></div>
<svg width="12" height="9" viewBox="0 0 12 9" style="position:absolute;left:116px;top:371px"><defs><linearGradient id="ag30" x1="0" y1="0" x2="0" y2="1"><stop offset="0" stop-color="#fdf0a0"/><stop offset="1" stop-color="#f5d84a"/></linearGradient></defs><path d="M0.5 2.5 H6.5 V0.5 L11.5 4.5 L6.5 8.5 V6.5 H0.5 Z" fill="url(#ag30)" stroke="#e2c54a" stroke-width="1"/></svg>
<div style="position:absolute;left:135px;top:365.53px;height:20px;line-height:20px;font-size:10px;font-weight:400;color:#000;white-space:nowrap;-webkit-text-stroke:0.2px #000;letter-spacing:-0.55px">10001800</div>
<div style="position:absolute;left:200px;top:365.53px;height:20px;line-height:20px;font-size:10px;font-weight:400;color:#000;white-space:nowrap;-webkit-text-stroke:0.2px #000;letter-spacing:-0.1px">Solaranlage Konstruktion</div>
<svg width="12" height="9" viewBox="0 0 12 9" style="position:absolute;left:320px;top:371px"><defs><linearGradient id="ag31" x1="0" y1="0" x2="0" y2="1"><stop offset="0" stop-color="#fdf0a0"/><stop offset="1" stop-color="#f5d84a"/></linearGradient></defs><path d="M0.5 2.5 H6.5 V0.5 L11.5 4.5 L6.5 8.5 V6.5 H0.5 Z" fill="url(#ag31)" stroke="#e2c54a" stroke-width="1"/></svg>
<svg width="16" height="14" viewBox="0 0 16 15" preserveAspectRatio="none" style="position:absolute;left:338px;top:369px"><defs><linearGradient id="gg32" x1="0" y1="0" x2="0.3" y2="1"><stop offset="0" stop-color="#b4b4b4"/><stop offset="1" stop-color="#505050"/></linearGradient></defs><path d="M6.62 2.69 L6.50 0.46 L9.50 0.46 L9.38 2.69 L10.42 3.13 L11.92 1.46 L14.04 3.58 L12.37 5.08 L12.81 6.12 L15.04 6.00 L15.04 9.00 L12.81 8.88 L12.37 9.92 L14.04 11.42 L11.92 13.54 L10.42 11.87 L9.38 12.31 L9.50 14.54 L6.50 14.54 L6.62 12.31 L5.58 11.87 L4.08 13.54 L1.96 11.42 L3.63 9.92 L3.19 8.88 L0.96 9.00 L0.96 6.00 L3.19 6.12 L3.63 5.08 L1.96 3.58 L4.08 1.46 L5.58 3.13 Z" fill="#fff" stroke="url(#gg32)" stroke-width="1"/><path d="M2.2 11.2 L4 9.6 L5.6 11.4 L4 13.2 Z M13.8 11.2 L12 9.6 L10.4 11.4 L12 13.2 Z M2.6 4 L4 2.2 L5 3.4 L3.6 4.8 Z M12.4 4.6 L13.6 3.6 L12.2 2.4 L11 3.6 Z" fill="#6a6a6a" opacity="0.75"/><circle cx="8" cy="7.3" r="2" fill="#dde4f2"/><circle cx="8" cy="7.3" r="1.45" fill="#e0a000"/></svg>
<div style="position:absolute;left:358px;top:367px;width:121px;height:18px;overflow:hidden">
<div style="position:absolute;left:0px;top:-1.47px;height:20px;line-height:20px;font-size:10px;font-weight:400;color:#000;white-space:nowrap;-webkit-text-stroke:0.2px #000;letter-spacing:-0.01px">Kabelschuhe 4mm</div>
</div>
<div style="position:absolute;left:46px;top:394px;width:19px;height:1px;background:repeating-linear-gradient(90deg,#8a8a8a 0 1px,transparent 1px 2px)"></div>
<svg width="12" height="9" viewBox="0 0 12 9" style="position:absolute;left:116px;top:390px"><defs><linearGradient id="ag33" x1="0" y1="0" x2="0" y2="1"><stop offset="0" stop-color="#fdf0a0"/><stop offset="1" stop-color="#f5d84a"/></linearGradient></defs><path d="M0.5 2.5 H6.5 V0.5 L11.5 4.5 L6.5 8.5 V6.5 H0.5 Z" fill="url(#ag33)" stroke="#e2c54a" stroke-width="1"/></svg>
<div style="position:absolute;left:135px;top:384.53px;height:20px;line-height:20px;font-size:10px;font-weight:400;color:#000;white-space:nowrap;-webkit-text-stroke:0.2px #000;letter-spacing:-0.55px">10001800</div>
<div style="position:absolute;left:200px;top:384.53px;height:20px;line-height:20px;font-size:10px;font-weight:400;color:#000;white-space:nowrap;-webkit-text-stroke:0.2px #000;letter-spacing:-0.1px">Solaranlage Konstruktion</div>
<svg width="12" height="9" viewBox="0 0 12 9" style="position:absolute;left:320px;top:390px"><defs><linearGradient id="ag34" x1="0" y1="0" x2="0" y2="1"><stop offset="0" stop-color="#fdf0a0"/><stop offset="1" stop-color="#f5d84a"/></linearGradient></defs><path d="M0.5 2.5 H6.5 V0.5 L11.5 4.5 L6.5 8.5 V6.5 H0.5 Z" fill="url(#ag34)" stroke="#e2c54a" stroke-width="1"/></svg>
<svg width="16" height="14" viewBox="0 0 16 15" preserveAspectRatio="none" style="position:absolute;left:338px;top:388px"><defs><linearGradient id="gg35" x1="0" y1="0" x2="0.3" y2="1"><stop offset="0" stop-color="#b4b4b4"/><stop offset="1" stop-color="#505050"/></linearGradient></defs><path d="M6.62 2.69 L6.50 0.46 L9.50 0.46 L9.38 2.69 L10.42 3.13 L11.92 1.46 L14.04 3.58 L12.37 5.08 L12.81 6.12 L15.04 6.00 L15.04 9.00 L12.81 8.88 L12.37 9.92 L14.04 11.42 L11.92 13.54 L10.42 11.87 L9.38 12.31 L9.50 14.54 L6.50 14.54 L6.62 12.31 L5.58 11.87 L4.08 13.54 L1.96 11.42 L3.63 9.92 L3.19 8.88 L0.96 9.00 L0.96 6.00 L3.19 6.12 L3.63 5.08 L1.96 3.58 L4.08 1.46 L5.58 3.13 Z" fill="#fff" stroke="url(#gg35)" stroke-width="1"/><path d="M2.2 11.2 L4 9.6 L5.6 11.4 L4 13.2 Z M13.8 11.2 L12 9.6 L10.4 11.4 L12 13.2 Z M2.6 4 L4 2.2 L5 3.4 L3.6 4.8 Z M12.4 4.6 L13.6 3.6 L12.2 2.4 L11 3.6 Z" fill="#6a6a6a" opacity="0.75"/><circle cx="8" cy="7.3" r="2" fill="#dde4f2"/><circle cx="8" cy="7.3" r="1.45" fill="#e0a000"/></svg>
<div style="position:absolute;left:358px;top:386px;width:121px;height:18px;overflow:hidden">
<div style="position:absolute;left:0px;top:-1.47px;height:20px;line-height:20px;font-size:10px;font-weight:400;color:#000;white-space:nowrap;-webkit-text-stroke:0.2px #000;letter-spacing:-0.05px">Kabelbinder schwarz, wass</div>
</div>
<svg width="5" height="5" style="position:absolute;left:478px;top:386px"><path d="M0 0 H5 V5 Z" fill="#800000"/></svg>
<div style="position:absolute;left:46px;top:413px;width:19px;height:1px;background:repeating-linear-gradient(90deg,#8a8a8a 0 1px,transparent 1px 2px)"></div>
<svg width="12" height="9" viewBox="0 0 12 9" style="position:absolute;left:116px;top:409px"><defs><linearGradient id="ag36" x1="0" y1="0" x2="0" y2="1"><stop offset="0" stop-color="#fdf0a0"/><stop offset="1" stop-color="#f5d84a"/></linearGradient></defs><path d="M0.5 2.5 H6.5 V0.5 L11.5 4.5 L6.5 8.5 V6.5 H0.5 Z" fill="url(#ag36)" stroke="#e2c54a" stroke-width="1"/></svg>
<div style="position:absolute;left:135px;top:403.53px;height:20px;line-height:20px;font-size:10px;font-weight:400;color:#000;white-space:nowrap;-webkit-text-stroke:0.2px #000;letter-spacing:-0.55px">10001800</div>
<div style="position:absolute;left:200px;top:403.53px;height:20px;line-height:20px;font-size:10px;font-weight:400;color:#000;white-space:nowrap;-webkit-text-stroke:0.2px #000;letter-spacing:-0.1px">Solaranlage Konstruktion</div>
<svg width="12" height="9" viewBox="0 0 12 9" style="position:absolute;left:320px;top:409px"><defs><linearGradient id="ag37" x1="0" y1="0" x2="0" y2="1"><stop offset="0" stop-color="#fdf0a0"/><stop offset="1" stop-color="#f5d84a"/></linearGradient></defs><path d="M0.5 2.5 H6.5 V0.5 L11.5 4.5 L6.5 8.5 V6.5 H0.5 Z" fill="url(#ag37)" stroke="#e2c54a" stroke-width="1"/></svg>
<svg width="16" height="14" viewBox="0 0 16 15" preserveAspectRatio="none" style="position:absolute;left:338px;top:407px"><defs><linearGradient id="gg38" x1="0" y1="0" x2="0.3" y2="1"><stop offset="0" stop-color="#b4b4b4"/><stop offset="1" stop-color="#505050"/></linearGradient></defs><path d="M6.62 2.69 L6.50 0.46 L9.50 0.46 L9.38 2.69 L10.42 3.13 L11.92 1.46 L14.04 3.58 L12.37 5.08 L12.81 6.12 L15.04 6.00 L15.04 9.00 L12.81 8.88 L12.37 9.92 L14.04 11.42 L11.92 13.54 L10.42 11.87 L9.38 12.31 L9.50 14.54 L6.50 14.54 L6.62 12.31 L5.58 11.87 L4.08 13.54 L1.96 11.42 L3.63 9.92 L3.19 8.88 L0.96 9.00 L0.96 6.00 L3.19 6.12 L3.63 5.08 L1.96 3.58 L4.08 1.46 L5.58 3.13 Z" fill="#fff" stroke="url(#gg38)" stroke-width="1"/><path d="M2.2 11.2 L4 9.6 L5.6 11.4 L4 13.2 Z M13.8 11.2 L12 9.6 L10.4 11.4 L12 13.2 Z M2.6 4 L4 2.2 L5 3.4 L3.6 4.8 Z M12.4 4.6 L13.6 3.6 L12.2 2.4 L11 3.6 Z" fill="#6a6a6a" opacity="0.75"/><circle cx="8" cy="7.3" r="2" fill="#dde4f2"/><circle cx="8" cy="7.3" r="1.45" fill="#e0a000"/></svg>
<div style="position:absolute;left:358px;top:405px;width:121px;height:18px;overflow:hidden">
<div style="position:absolute;left:0px;top:-1.47px;height:20px;line-height:20px;font-size:10px;font-weight:400;color:#000;white-space:nowrap;-webkit-text-stroke:0.2px #000;letter-spacing:-0.05px">Kabelbinder schwarz, wass</div>
</div>
<svg width="5" height="5" style="position:absolute;left:478px;top:405px"><path d="M0 0 H5 V5 Z" fill="#800000"/></svg>
<div style="position:absolute;left:46px;top:432px;width:19px;height:1px;background:repeating-linear-gradient(90deg,#8a8a8a 0 1px,transparent 1px 2px)"></div>
<svg width="12" height="9" viewBox="0 0 12 9" style="position:absolute;left:116px;top:428px"><defs><linearGradient id="ag39" x1="0" y1="0" x2="0" y2="1"><stop offset="0" stop-color="#fdf0a0"/><stop offset="1" stop-color="#f5d84a"/></linearGradient></defs><path d="M0.5 2.5 H6.5 V0.5 L11.5 4.5 L6.5 8.5 V6.5 H0.5 Z" fill="url(#ag39)" stroke="#e2c54a" stroke-width="1"/></svg>
<div style="position:absolute;left:135px;top:422.53px;height:20px;line-height:20px;font-size:10px;font-weight:400;color:#000;white-space:nowrap;-webkit-text-stroke:0.2px #000;letter-spacing:-0.55px">10001800</div>
<div style="position:absolute;left:200px;top:422.53px;height:20px;line-height:20px;font-size:10px;font-weight:400;color:#000;white-space:nowrap;-webkit-text-stroke:0.2px #000;letter-spacing:-0.1px">Solaranlage Konstruktion</div>
<svg width="12" height="9" viewBox="0 0 12 9" style="position:absolute;left:320px;top:428px"><defs><linearGradient id="ag40" x1="0" y1="0" x2="0" y2="1"><stop offset="0" stop-color="#fdf0a0"/><stop offset="1" stop-color="#f5d84a"/></linearGradient></defs><path d="M0.5 2.5 H6.5 V0.5 L11.5 4.5 L6.5 8.5 V6.5 H0.5 Z" fill="url(#ag40)" stroke="#e2c54a" stroke-width="1"/></svg>
<svg width="16" height="14" viewBox="0 0 16 15" preserveAspectRatio="none" style="position:absolute;left:338px;top:426px"><defs><linearGradient id="gg41" x1="0" y1="0" x2="0.3" y2="1"><stop offset="0" stop-color="#b4b4b4"/><stop offset="1" stop-color="#505050"/></linearGradient></defs><path d="M6.62 2.69 L6.50 0.46 L9.50 0.46 L9.38 2.69 L10.42 3.13 L11.92 1.46 L14.04 3.58 L12.37 5.08 L12.81 6.12 L15.04 6.00 L15.04 9.00 L12.81 8.88 L12.37 9.92 L14.04 11.42 L11.92 13.54 L10.42 11.87 L9.38 12.31 L9.50 14.54 L6.50 14.54 L6.62 12.31 L5.58 11.87 L4.08 13.54 L1.96 11.42 L3.63 9.92 L3.19 8.88 L0.96 9.00 L0.96 6.00 L3.19 6.12 L3.63 5.08 L1.96 3.58 L4.08 1.46 L5.58 3.13 Z" fill="#fff" stroke="url(#gg41)" stroke-width="1"/><path d="M2.2 11.2 L4 9.6 L5.6 11.4 L4 13.2 Z M13.8 11.2 L12 9.6 L10.4 11.4 L12 13.2 Z M2.6 4 L4 2.2 L5 3.4 L3.6 4.8 Z M12.4 4.6 L13.6 3.6 L12.2 2.4 L11 3.6 Z" fill="#6a6a6a" opacity="0.75"/><circle cx="8" cy="7.3" r="2" fill="#dde4f2"/><circle cx="8" cy="7.3" r="1.45" fill="#e0a000"/></svg>
<div style="position:absolute;left:358px;top:424px;width:121px;height:18px;overflow:hidden">
<div style="position:absolute;left:0px;top:-1.47px;height:20px;line-height:20px;font-size:10px;font-weight:400;color:#000;white-space:nowrap;-webkit-text-stroke:0.2px #000;letter-spacing:-0.05px">Kabelbinder schwarz, wass</div>
</div>
<svg width="5" height="5" style="position:absolute;left:478px;top:424px"><path d="M0 0 H5 V5 Z" fill="#800000"/></svg>
<div style="position:absolute;left:46px;top:451px;width:19px;height:1px;background:repeating-linear-gradient(90deg,#8a8a8a 0 1px,transparent 1px 2px)"></div>
<svg width="12" height="9" viewBox="0 0 12 9" style="position:absolute;left:116px;top:447px"><defs><linearGradient id="ag42" x1="0" y1="0" x2="0" y2="1"><stop offset="0" stop-color="#fdf0a0"/><stop offset="1" stop-color="#f5d84a"/></linearGradient></defs><path d="M0.5 2.5 H6.5 V0.5 L11.5 4.5 L6.5 8.5 V6.5 H0.5 Z" fill="url(#ag42)" stroke="#e2c54a" stroke-width="1"/></svg>
<div style="position:absolute;left:135px;top:441.53px;height:20px;line-height:20px;font-size:10px;font-weight:400;color:#000;white-space:nowrap;-webkit-text-stroke:0.2px #000;letter-spacing:-0.55px">10001800</div>
<div style="position:absolute;left:200px;top:441.53px;height:20px;line-height:20px;font-size:10px;font-weight:400;color:#000;white-space:nowrap;-webkit-text-stroke:0.2px #000;letter-spacing:-0.1px">Solaranlage Konstruktion</div>
<svg width="12" height="9" viewBox="0 0 12 9" style="position:absolute;left:320px;top:447px"><defs><linearGradient id="ag43" x1="0" y1="0" x2="0" y2="1"><stop offset="0" stop-color="#fdf0a0"/><stop offset="1" stop-color="#f5d84a"/></linearGradient></defs><path d="M0.5 2.5 H6.5 V0.5 L11.5 4.5 L6.5 8.5 V6.5 H0.5 Z" fill="url(#ag43)" stroke="#e2c54a" stroke-width="1"/></svg>
<svg width="16" height="14" viewBox="0 0 16 15" preserveAspectRatio="none" style="position:absolute;left:338px;top:445px"><defs><linearGradient id="gg44" x1="0" y1="0" x2="0.3" y2="1"><stop offset="0" stop-color="#b4b4b4"/><stop offset="1" stop-color="#505050"/></linearGradient></defs><path d="M6.62 2.69 L6.50 0.46 L9.50 0.46 L9.38 2.69 L10.42 3.13 L11.92 1.46 L14.04 3.58 L12.37 5.08 L12.81 6.12 L15.04 6.00 L15.04 9.00 L12.81 8.88 L12.37 9.92 L14.04 11.42 L11.92 13.54 L10.42 11.87 L9.38 12.31 L9.50 14.54 L6.50 14.54 L6.62 12.31 L5.58 11.87 L4.08 13.54 L1.96 11.42 L3.63 9.92 L3.19 8.88 L0.96 9.00 L0.96 6.00 L3.19 6.12 L3.63 5.08 L1.96 3.58 L4.08 1.46 L5.58 3.13 Z" fill="#fff" stroke="url(#gg44)" stroke-width="1"/><path d="M2.2 11.2 L4 9.6 L5.6 11.4 L4 13.2 Z M13.8 11.2 L12 9.6 L10.4 11.4 L12 13.2 Z M2.6 4 L4 2.2 L5 3.4 L3.6 4.8 Z M12.4 4.6 L13.6 3.6 L12.2 2.4 L11 3.6 Z" fill="#6a6a6a" opacity="0.75"/><circle cx="8" cy="7.3" r="2" fill="#dde4f2"/><circle cx="8" cy="7.3" r="1.45" fill="#e0a000"/></svg>
<div style="position:absolute;left:358px;top:443px;width:121px;height:18px;overflow:hidden">
<div style="position:absolute;left:0px;top:-1.47px;height:20px;line-height:20px;font-size:10px;font-weight:400;color:#000;white-space:nowrap;-webkit-text-stroke:0.2px #000;letter-spacing:-0.09px">Klebeband PVC, isolierend,</div>
</div>
<svg width="5" height="5" style="position:absolute;left:478px;top:443px"><path d="M0 0 H5 V5 Z" fill="#800000"/></svg>
<div style="position:absolute;left:40px;top:461.53px;height:20px;line-height:20px;font-size:10px;font-weight:400;color:#000;white-space:nowrap;-webkit-text-stroke:0.2px #000;">Montagearbeit</div>
<svg width="5" height="5" style="position:absolute;left:107px;top:462px"><path d="M0 0 H5 V5 Z" fill="#800000"/></svg>
<div style="position:absolute;left:11px;top:492px;width:84px;height:18px;border:1px solid #5c5c64;background:linear-gradient(#fcf0b6,#f3d56e)"></div>
<div style="position:absolute;left:26px;top:491.53px;height:20px;line-height:20px;font-size:10px;font-weight:400;color:#000;white-space:nowrap;-webkit-text-stroke:0.2px #000;">Aktualisieren</div>
<div style="position:absolute;left:26px;top:506px;width:7px;height:1px;background:#000"></div>
<div style="position:absolute;left:105px;top:492px;width:84px;height:18px;border:1px solid #5c5c64;background:linear-gradient(#fcf0b6,#f3d56e)"></div>
<div style="position:absolute;left:124px;top:491.53px;height:20px;line-height:20px;font-size:10px;font-weight:400;color:#000;white-space:nowrap;-webkit-text-stroke:0.2px #000;">Abbrechen</div>
<div style="position:absolute;left:124px;top:506px;width:7px;height:1px;background:#000"></div>
<div style="position:absolute;left:584px;top:492px;width:101px;height:18px;border:1px solid #5c5c64;background:linear-gradient(#fcf0b6,#f3d56e)"></div>
<div style="position:absolute;left:588px;top:491.53px;height:20px;line-height:20px;font-size:10px;font-weight:400;color:#000;white-space:nowrap;-webkit-text-stroke:0.2px #000;">Optionen</div>
<div style="position:absolute;left:588px;top:506px;width:8px;height:1px;background:#000"></div>
<svg width="10" height="6" style="position:absolute;left:673px;top:498px"><path d="M0 0 H10 L5 6 Z" fill="#5a5a5a"/></svg>
</body></html>
